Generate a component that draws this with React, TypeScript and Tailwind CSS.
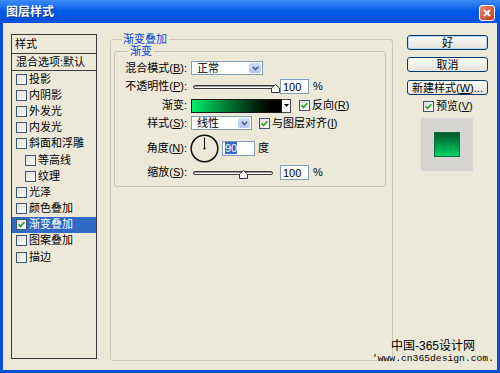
import type { ReactNode } from 'react';

const ui = "font-['Liberation_Sans','Noto_Sans_CJK_SC',sans-serif]";

const effects: { name: string; sub?: boolean; on?: boolean }[] = [
  { name: '投影' },
  { name: '内阴影' },
  { name: '外发光' },
  { name: '内发光' },
  { name: '斜面和浮雕' },
  { name: '等高线', sub: true },
  { name: '纹理', sub: true },
  { name: '光泽' },
  { name: '颜色叠加' },
  { name: '渐变叠加', on: true },
  { name: '图案叠加' },
  { name: '描边' }
];

function Check({ checked, className = '' }: { checked?: boolean; className?: string }) {
  return (
    <span
      className={`flex h-[11px] w-[11px] shrink-0 items-center justify-center border border-[#3f5872] bg-gradient-to-br from-[#dedcd4] to-white ${className}`}
    >
      {checked ? (
        <svg width="7" height="7" viewBox="0 0 7 7">
          <path d="M0.6 3.4 L2.6 5.4 L6.4 1.2" stroke="#21a121" strokeWidth="1.6" fill="none" />
        </svg>
      ) : null}
    </span>
  );
}

function Label({ children }: { children: ReactNode }) {
  return <span className="w-[72px] shrink-0 text-right text-[11px] leading-[13px] text-black">{children}</span>;
}

function Combo({ value, className }: { value: string; className: string }) {
  return (
    <div className={`flex h-[14px] items-center justify-between border border-[#7f9db9] bg-white ${className}`}>
      <span className="pl-[5px] text-[11px] leading-[12px]">{value}</span>
      <span className="mr-[1px] flex h-[10px] w-[12px] items-center justify-center rounded-[2px] bg-gradient-to-b from-[#d2ddfb] to-[#b3c6f3]">
        <svg width="7" height="5" viewBox="0 0 7 5">
          <path d="M0.8 0.8 L3.5 3.6 L6.2 0.8" stroke="#4d6185" strokeWidth="1.5" fill="none" />
        </svg>
      </span>
    </div>
  );
}

function Slider({ track, thumb }: { track: string; thumb: string }) {
  return (
    <div className="relative ml-[4px] flex h-full w-[87px] items-center">
      <div className={`ml-[2px] h-[4px] rounded-full border border-[#3a3a3a] bg-white shadow-[inset_0_1px_0_#9a9a9a] ${track}`} />
      <svg className={`absolute top-[calc(50%-3px)] ${thumb}`} width="9" height="9" viewBox="0 0 9 9">
        <polygon points="4.5,0.5 8.5,4 8.5,8.5 0.5,8.5 0.5,4" fill="#fff" stroke="#333" strokeWidth="1" />
      </svg>
    </div>
  );
}

function NumBox({ children, className = '' }: { children: ReactNode; className?: string }) {
  return (
    <div className={`flex h-[15px] shrink-0 items-center border border-[#7f9db9] bg-white pl-[2px] text-[11px] leading-[12px] ${className}`}>
      {children}
    </div>
  );
}

function Btn({ children, className = '' }: { children: ReactNode; className?: string }) {
  return (
    <div
      className={`flex h-[15px] w-full items-center justify-center rounded-[3px] border border-[#003c74] bg-gradient-to-b from-white to-[#e4e2d8] text-[11px] leading-[12px] text-black ${className}`}
    >
      {children}
    </div>
  );
}

export default function App() {
  return (
    <div className={`flex h-[373px] w-[500px] flex-col bg-[#0a4fd8] ${ui}`}>
      <div className="flex h-[23px] items-center justify-between bg-gradient-to-b from-[#3a8cf6] via-[#0058e6] to-[#0251dc] pl-[6px] pr-[5px]">
        <span className="text-[12px] font-bold leading-none text-white [text-shadow:1px_1px_0_#0a2d8a]">图层样式</span>
        <span className="mt-[2px] flex h-[16px] w-[16px] items-center justify-center rounded-[3px] border border-white bg-gradient-to-br from-[#ea8a62] to-[#c3381c]">
          <svg width="8" height="8" viewBox="0 0 8 8">
            <path d="M1 1 L7 7 M7 1 L1 7" stroke="#fff" strokeWidth="1.8" />
          </svg>
        </span>
      </div>

      <div className="relative mx-[3px] mb-[3px] flex flex-1 items-start bg-[#ece9d8] text-black">
        {/* style list */}
        <div className="ml-[8px] mt-[11px] flex h-[325px] w-[86px] flex-col border border-[#3a3a3a] text-[11px] leading-[13px]">
          <div className="flex h-[19px] items-center border-b border-[#3a3a3a] pl-[3px]">样式</div>
          <div className="flex h-[17px] items-center border-b border-[#3a3a3a] pl-[4px]">混合选项:默认</div>
          {effects.map((e) => (
            <div
              key={e.name}
              className={`flex h-[16.2px] items-center ${e.sub ? 'pl-[13px]' : 'pl-[4px]'} ${e.on ? 'bg-[#316ac5] text-white' : ''}`}
            >
              <Check checked={e.on} />
              <span className="ml-[2px]">{e.name}</span>
            </div>
          ))}
        </div>

        {/* gradient overlay group */}
        <div className="relative ml-[13px] mt-[16px] h-[322px] w-[283px] rounded-[3px] border border-[#c8c5b6]">
          <span className="absolute left-[10px] top-[-8px] bg-[#ece9d8] px-[2px] text-[11px] leading-[14px] text-[#0046d5]">渐变叠加</span>
          <div className="relative ml-[3px] mt-[11px] flex h-[136px] w-[272px] flex-col rounded-[3px] border border-[#c8c5b6]">
            <span className="absolute left-[13px] top-[-8px] bg-[#ece9d8] px-[2px] text-[11px] leading-[14px] text-[#0046d5]">渐变</span>

            <div className="mt-[8px] flex h-[16px] items-center">
              <Label>
                混合模式(<u>B</u>):
              </Label>
              <Combo value="正常" className="ml-[4px] w-[72px]" />
            </div>

            <div className="mt-[2px] flex h-[17px] items-center">
              <Label>
                不透明性(<u>P</u>):
              </Label>
              <Slider track="w-[84px]" thumb="left-[80px]" />
              <NumBox className="ml-[2px] w-[29px]">100</NumBox>
              <span className="ml-[4px] text-[11px] leading-[13px]">%</span>
            </div>

            <div className="mt-[2px] flex h-[17px] items-center">
              <Label>渐变:</Label>
              <div className="ml-[4px] flex h-[14px]">
                <div className="w-[91px] border border-[#1a1a1a] bg-gradient-to-r from-[#00f06c] to-black" />
                <div className="flex w-[9px] items-center justify-center border border-l-0 border-[#444] bg-white">
                  <svg width="5" height="3" viewBox="0 0 5 3">
                    <polygon points="0,0 5,0 2.5,3" fill="#000" />
                  </svg>
                </div>
              </div>
              <Check checked className="ml-[8px]" />
              <span className="ml-[2px] text-[11px] leading-[13px]">
                反向(<u>R</u>)
              </span>
            </div>

            <div className="mt-[1px] flex h-[16px] items-center">
              <Label>
                样式(<u>S</u>):
              </Label>
              <Combo value="线性" className="ml-[4px] w-[61px]" />
              <Check checked className="ml-[7px]" />
              <span className="ml-[2px] text-[11px] leading-[13px]">
                与图层对齐(<u>I</u>)
              </span>
            </div>

            <div className="mt-[2px] flex h-[30px] items-center">
              <Label>
                角度(<u>N</u>):
              </Label>
              <svg className="ml-[3px] shrink-0" width="29" height="29" viewBox="0 0 29 29">
                <circle cx="14.5" cy="14.5" r="13.3" fill="none" stroke="#111" strokeWidth="1.5" />
                <line x1="14.5" y1="14.5" x2="14.5" y2="3.5" stroke="#111" strokeWidth="1" />
                <circle cx="14.5" cy="14.5" r="1.1" fill="#111" />
              </svg>
              <NumBox className="ml-[3px] w-[33px]">
                <span className="bg-[#316ac5] text-white">90</span>
              </NumBox>
              <span className="ml-[3px] text-[11px] leading-[13px]">度</span>
            </div>

            <div className="mt-[1px] flex h-[17px] items-center">
              <Label>
                缩放(<u>S</u>):
              </Label>
              <Slider track="w-[80px]" thumb="left-[48px]" />
              <NumBox className="ml-[2px] w-[29px]">100</NumBox>
              <span className="ml-[4px] text-[11px] leading-[13px]">%</span>
            </div>
          </div>
        </div>

        {/* buttons and preview */}
        <div className="ml-[14px] mt-[12px] flex w-[81px] flex-col">
          <Btn className="shadow-[inset_0_0_0_1px_#b9d1f5]">好</Btn>
          <Btn className="mt-[7px]">取消</Btn>
          <Btn className="mt-[8px]">
            新建样式(<u>W</u>)...
          </Btn>
          <div className="ml-[16px] mt-[4px] flex h-[14px] items-center">
            <Check checked />
            <span className="ml-[2px] text-[11px] leading-[13px]">
              预览(<u>V</u>)
            </span>
          </div>
          <div className="ml-[14px] mt-[5px] flex h-[53px] w-[52px] items-center justify-center bg-[#d6d5d2]">
            <div className="h-[25px] w-[26px] border border-[#0b6e36] bg-gradient-to-b from-[#005a2a] to-[#00d466]" />
          </div>
        </div>

        <div className="absolute bottom-[5px] right-[3px] flex flex-col items-end text-black">
          <span className="mr-[19px] text-[12px] leading-[13px]">中国-365设计网</span>
          <span className="font-['Liberation_Mono',monospace] text-[9.7px] leading-[12px]">'www.cn365design.com.</span>
        </div>
      </div>
    </div>
  );
}
